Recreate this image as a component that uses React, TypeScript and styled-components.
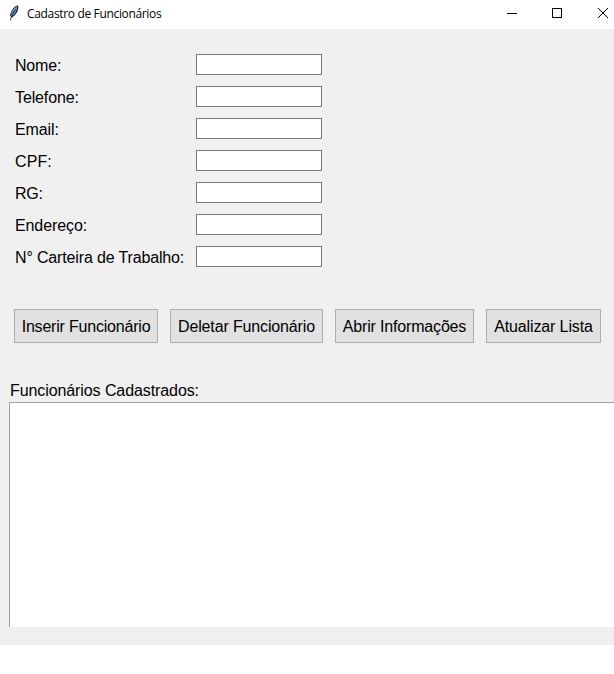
import React from 'react';
import styled, { createGlobalStyle } from 'styled-components';

const Global = createGlobalStyle`
  * { box-sizing: border-box; }
  body { margin: 0; background: #fff; overflow: hidden; }
`;
const Window = styled.div`
  width: 614px; height: 645px; background: #f0f0f0; overflow: hidden;
  font: 16px/20px "Liberation Sans", Arial, sans-serif; color: #000;
`;
const TitleBar = styled.header`
  height: 29px; background: #fff; display: flex; align-items: flex-start;
`;
const AppIcon = styled.svg`margin: 5px 0 0 7px; width: 14px; height: 17px; flex: none;`;
const Title = styled.h1`
  margin: 6px 0 0 6px; flex: 1; font: 12px/16px "Open Sans", "Noto Sans", sans-serif;
  letter-spacing: -0.34px; white-space: nowrap;
`;
const Controls = styled.svg`width: 110px; height: 29px; flex: none;`;
const Form = styled.form`
  display: grid; grid-template-columns: 181px 126px; grid-auto-rows: 32px; padding: 20px 0 0 15px;
  align-items: start;
`;
const Label = styled.label<{ $spacing: number }>`
  margin-top: 7px; white-space: nowrap; letter-spacing: ${p => p.$spacing}px;
`;
const Field = styled.input`
  width: 126px; height: 21px; border: 1px solid #7a7a7a; border-radius: 0; background: #fff;
  padding: 0 2px; outline: 0; margin: 5px 0 0;
`;
const Actions = styled.div`display: flex; gap: 12px; margin: 36px 0 0 14px;`;
const Button = styled.button<{ $w: number; $spacing: number }>`
  width: ${p => p.$w}px; height: 34px; flex: none; padding: 2px 0 0; border: 1px solid #adadad;
  background: #e1e1e1; font: inherit; color: #000; white-space: nowrap;
  letter-spacing: ${p => p.$spacing}px;
`;
const ListTitle = styled.h2`margin: 38px 0 0 10px; font: inherit; letter-spacing: -0.09px;`;
const List = styled.div`
  margin: 1px 0 0 9px; height: 225px; background: #fff; border: solid #a0a0a0; border-width: 1px 0 0 1px;
`;

const fields = [
  { text: 'Nome:', spacing: -0.2 },
  { text: 'Telefone:', spacing: -0.12 },
  { text: 'Email:', spacing: -0.1 },
  { text: 'CPF:', spacing: 0.1 },
  { text: 'RG:', spacing: -0.3 },
  { text: 'Endereço:', spacing: -0.1 },
  { text: 'N° Carteira de Trabalho:', spacing: -0.15 },
];
const actions = [
  { text: 'Inserir Funcionário', w: 144, spacing: -0.2 },
  { text: 'Deletar Funcionário', w: 153, spacing: -0.14 },
  { text: 'Abrir Informações', w: 139, spacing: -0.17 },
  { text: 'Atualizar Lista', w: 115, spacing: -0.13 },
];

export default function App() {
  return (
    <>
      <Global />
      <Window>
        <TitleBar>
          <AppIcon viewBox="0 0 14 17">
            <path d="M10.500.7C7.500 1.500 4 5.500 3.600 11L5 12C8.500 9.500 11.300 5 10.500.7Z" fill="#5b95d6" stroke="#333" />
            <path d="M10.800 1.500C11 5.500 8.500 9.500 5.200 12" fill="none" stroke="#111" />
            <path d="M8.500 4.500C6 8 4.200 11 3.300 15.500" fill="none" stroke="#111" strokeWidth=".8" />
          </AppIcon>
          <Title>Cadastro de Funcionários</Title>
          <Controls viewBox="0 0 110 29" fill="none" stroke="#000">
            <path d="M3 13.500H13" />
            <rect x="48.500" y="8.500" width="9" height="9" />
            <path d="M94 8L104 18M104 8L94 18" />
          </Controls>
        </TitleBar>
        <Form>
          {fields.map((f, i) => (
            <React.Fragment key={f.text}>
              <Label htmlFor={`f${i}`} $spacing={f.spacing}>{f.text}</Label>
              <Field id={`f${i}`} />
            </React.Fragment>
          ))}
        </Form>
        <Actions>
          {actions.map(a => <Button key={a.text} $w={a.w} $spacing={a.spacing}>{a.text}</Button>)}
        </Actions>
        <ListTitle>Funcionários Cadastrados:</ListTitle>
        <List />
      </Window>
    </>
  );
}
